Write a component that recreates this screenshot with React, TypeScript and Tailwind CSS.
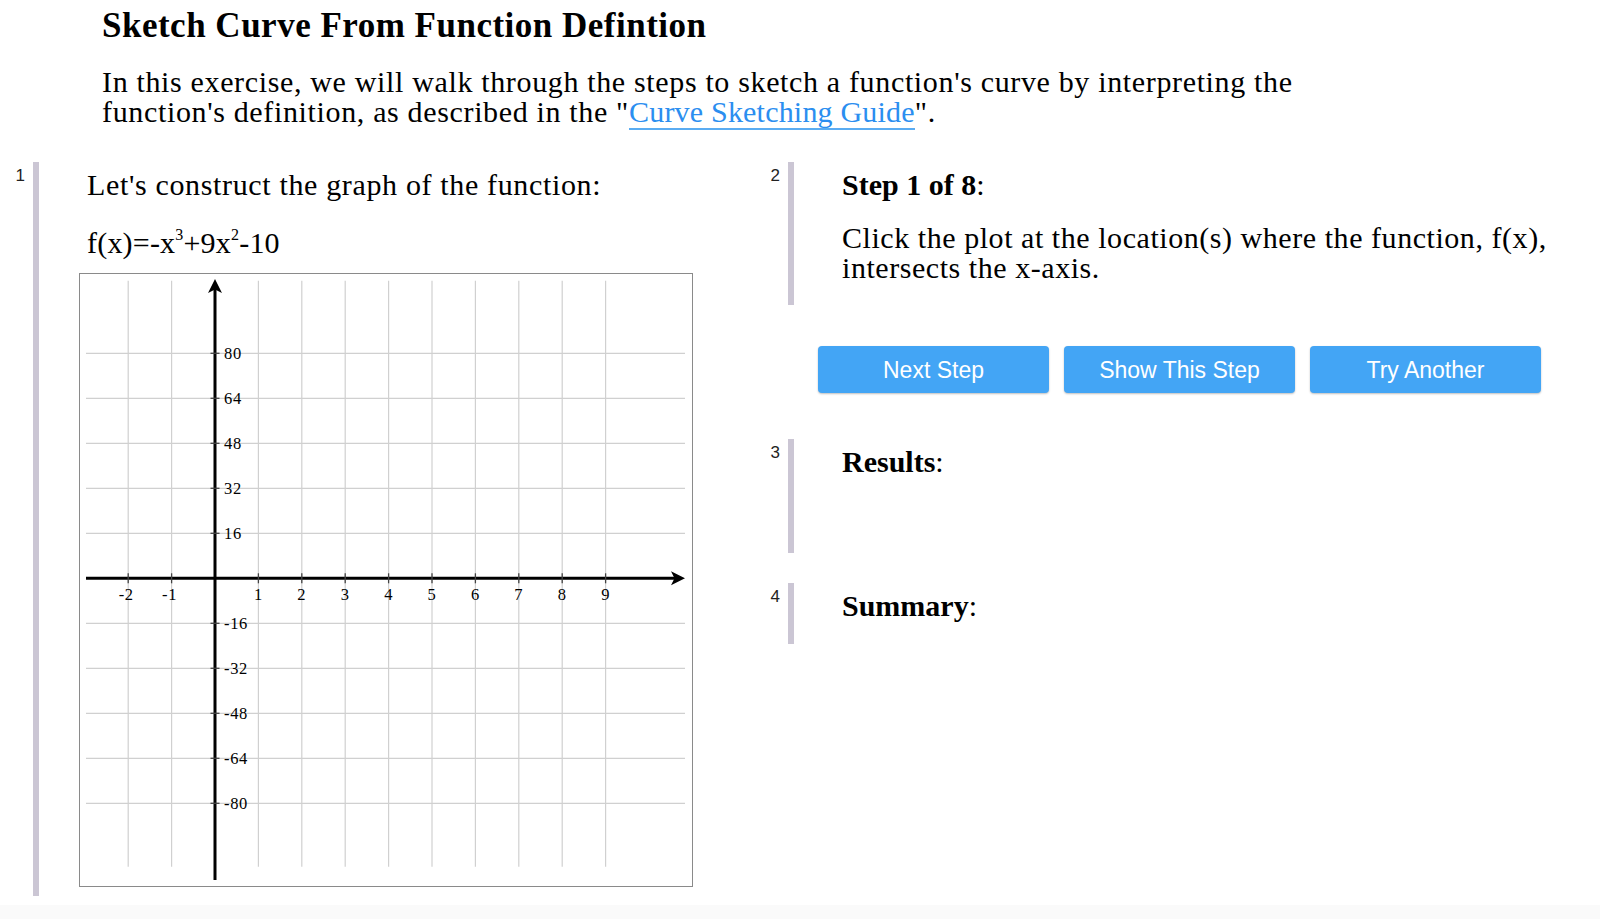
import React from 'react';

const serif = { fontFamily: '"Liberation Serif", "Times New Roman", serif' };

const X0 = 135; // y-axis position inside the plot
const Y0 = 304.3; // x-axis position inside the plot
const DX = 43.4;
const DY = 45;

const xTicks = [-2, -1, 1, 2, 3, 4, 5, 6, 7, 8, 9];
const yTicks = [80, 64, 48, 32, 16, -16, -32, -48, -64, -80];

const Plot: React.FC = () => (
  <div className="-ml-2 h-[614px] w-[614px] border border-[#8a8a8a] bg-white">
    <svg width="612" height="612" viewBox="0 0 612 612" className="block">
      {xTicks.map((k) => {
        const x = X0 + k * DX;
        return <line key={`vx${k}`} x1={x} y1={6.7} x2={x} y2={592.7} stroke="#d0d0d0" strokeWidth="1.2" />;
      })}
      {yTicks.map((v) => {
        const y = Y0 - (v / 16) * DY;
        return <line key={`hy${v}`} x1={6} y1={y} x2={605} y2={y} stroke="#d0d0d0" strokeWidth="1.2" />;
      })}

      {/* axes */}
      <line x1={6} y1={Y0} x2={596} y2={Y0} stroke="#000" strokeWidth="3" />
      <path d={`M605 ${Y0} L591 ${Y0 - 7} L594.5 ${Y0} L591 ${Y0 + 7} Z`} fill="#000" />
      <line x1={X0} y1={606} x2={X0} y2={14} stroke="#000" strokeWidth="3" />
      <path d={`M${X0} 5 L${X0 - 7} 19 L${X0} 15.5 L${X0 + 7} 19 Z`} fill="#000" />

      {xTicks.map((k) => {
        const x = X0 + k * DX;
        return <line key={`tx${k}`} x1={x} y1={Y0 - 5} x2={x} y2={Y0 + 5} stroke="#444" strokeWidth="1.3" />;
      })}
      {yTicks.map((v) => {
        const y = Y0 - (v / 16) * DY;
        return <line key={`ty${v}`} x1={X0 - 4.5} y1={y} x2={X0 + 4.5} y2={y} stroke="#444" strokeWidth="1.3" />;
      })}

      {xTicks.map((k) => (
        <text
          key={`lx${k}`}
          x={X0 + k * DX - (k < 0 ? 2 : 0)}
          y={326}
          textAnchor="middle"
          fontSize="16.5"
          fill="#000"
          style={serif}
        >
          {k}
        </text>
      ))}
      {yTicks.map((v) => (
        <text
          key={`ly${v}`}
          x={X0 + 9}
          y={Y0 - (v / 16) * DY + 5.5}
          fontSize="16.5"
          fill="#000"
          style={serif}
        >
          {v}
        </text>
      ))}
    </svg>
  </div>
);

const Cell: React.FC<{ n: number; className?: string; children: React.ReactNode }> = ({ n, className, children }) => (
  <div className="flex">
    <div className="w-[25px] shrink-0 pt-1 text-right font-['Liberation_Sans',Arial,sans-serif] text-[17px] leading-[20px] tracking-normal text-[#222]">
      {n}
    </div>
    <div className={`ml-[8px] flex-1 border-l-[6px] border-[#cbc6d4] pl-[48px] ${className ?? ''}`}>{children}</div>
  </div>
);

const StepButton: React.FC<{ label: string }> = ({ label }) => (
  <button className="h-[47px] w-[231px] rounded-[4px] bg-[#43a5f5] font-['Liberation_Sans',Arial,sans-serif] text-[23px] text-white shadow-[0_1px_2px_rgba(0,0,0,0.25)]">
    {label}
  </button>
);

export default function App() {
  return (
    <div className="min-h-screen bg-[#fafafa] text-black" style={serif}>
      <div className="bg-white pb-[9px]">
        <div className="pl-[102px] pt-[6px]">
          <h1 className="text-[35px] font-bold leading-[40px] tracking-[0.5px]">Sketch Curve From Function Defintion</h1>
          <p className="mt-[21px] w-[1260px] text-[30px] leading-[30px] tracking-[0.65px]">
            In this exercise, we will walk through the steps to sketch a function's curve by interpreting the
            function's definition, as described in the "
            <a href="#" className="border-b-2 border-[#5aacf2] tracking-[0.2px] text-[#2b8ef0]">
              Curve Sketching Guide
            </a>
            ".
          </p>
        </div>

        <div className="mt-[35px] flex text-[30px] leading-[30px] tracking-[0.65px]">
          <div className="w-[755px] shrink-0">
            <Cell n={1} className="pt-[8px] pb-[9px]">
              <p>Let's construct the graph of the function:</p>
              <p className="mt-[28px] tracking-[0.2px]">
                f(x)=-x<sup className="-top-[13px] text-[16px]">3</sup>+9x<sup className="-top-[13px] text-[16px]">2</sup>-10
              </p>
              <div className="mt-[15px]">
                <Plot />
              </div>
            </Cell>
          </div>

          <div className="flex-1">
            <Cell n={2} className="pt-[8px] pb-[22px]">
              <p>
                <b className="tracking-normal">Step 1 of 8</b>:
              </p>
              <p className="mt-[23px] tracking-[0.55px]">
                Click the plot at the location(s) where the function, f(x), intersects the x-axis.
              </p>
            </Cell>

            <div className="ml-[63px] mt-[41px] flex gap-[15px] tracking-normal">
              <StepButton label="Next Step" />
              <StepButton label="Show This Step" />
              <StepButton label="Try Another" />
            </div>

            <div className="mt-[46px]">
              <Cell n={3} className="pt-[8px] pb-[76px]">
                <p>
                  <b className="tracking-normal">Results</b>:
                </p>
              </Cell>
            </div>

            <div className="mt-[30px]">
              <Cell n={4} className="pt-[8px] pb-[23px]">
                <p>
                  <b className="tracking-normal">Summary</b>:
                </p>
              </Cell>
            </div>
          </div>
        </div>
      </div>
    </div>
  );
}
